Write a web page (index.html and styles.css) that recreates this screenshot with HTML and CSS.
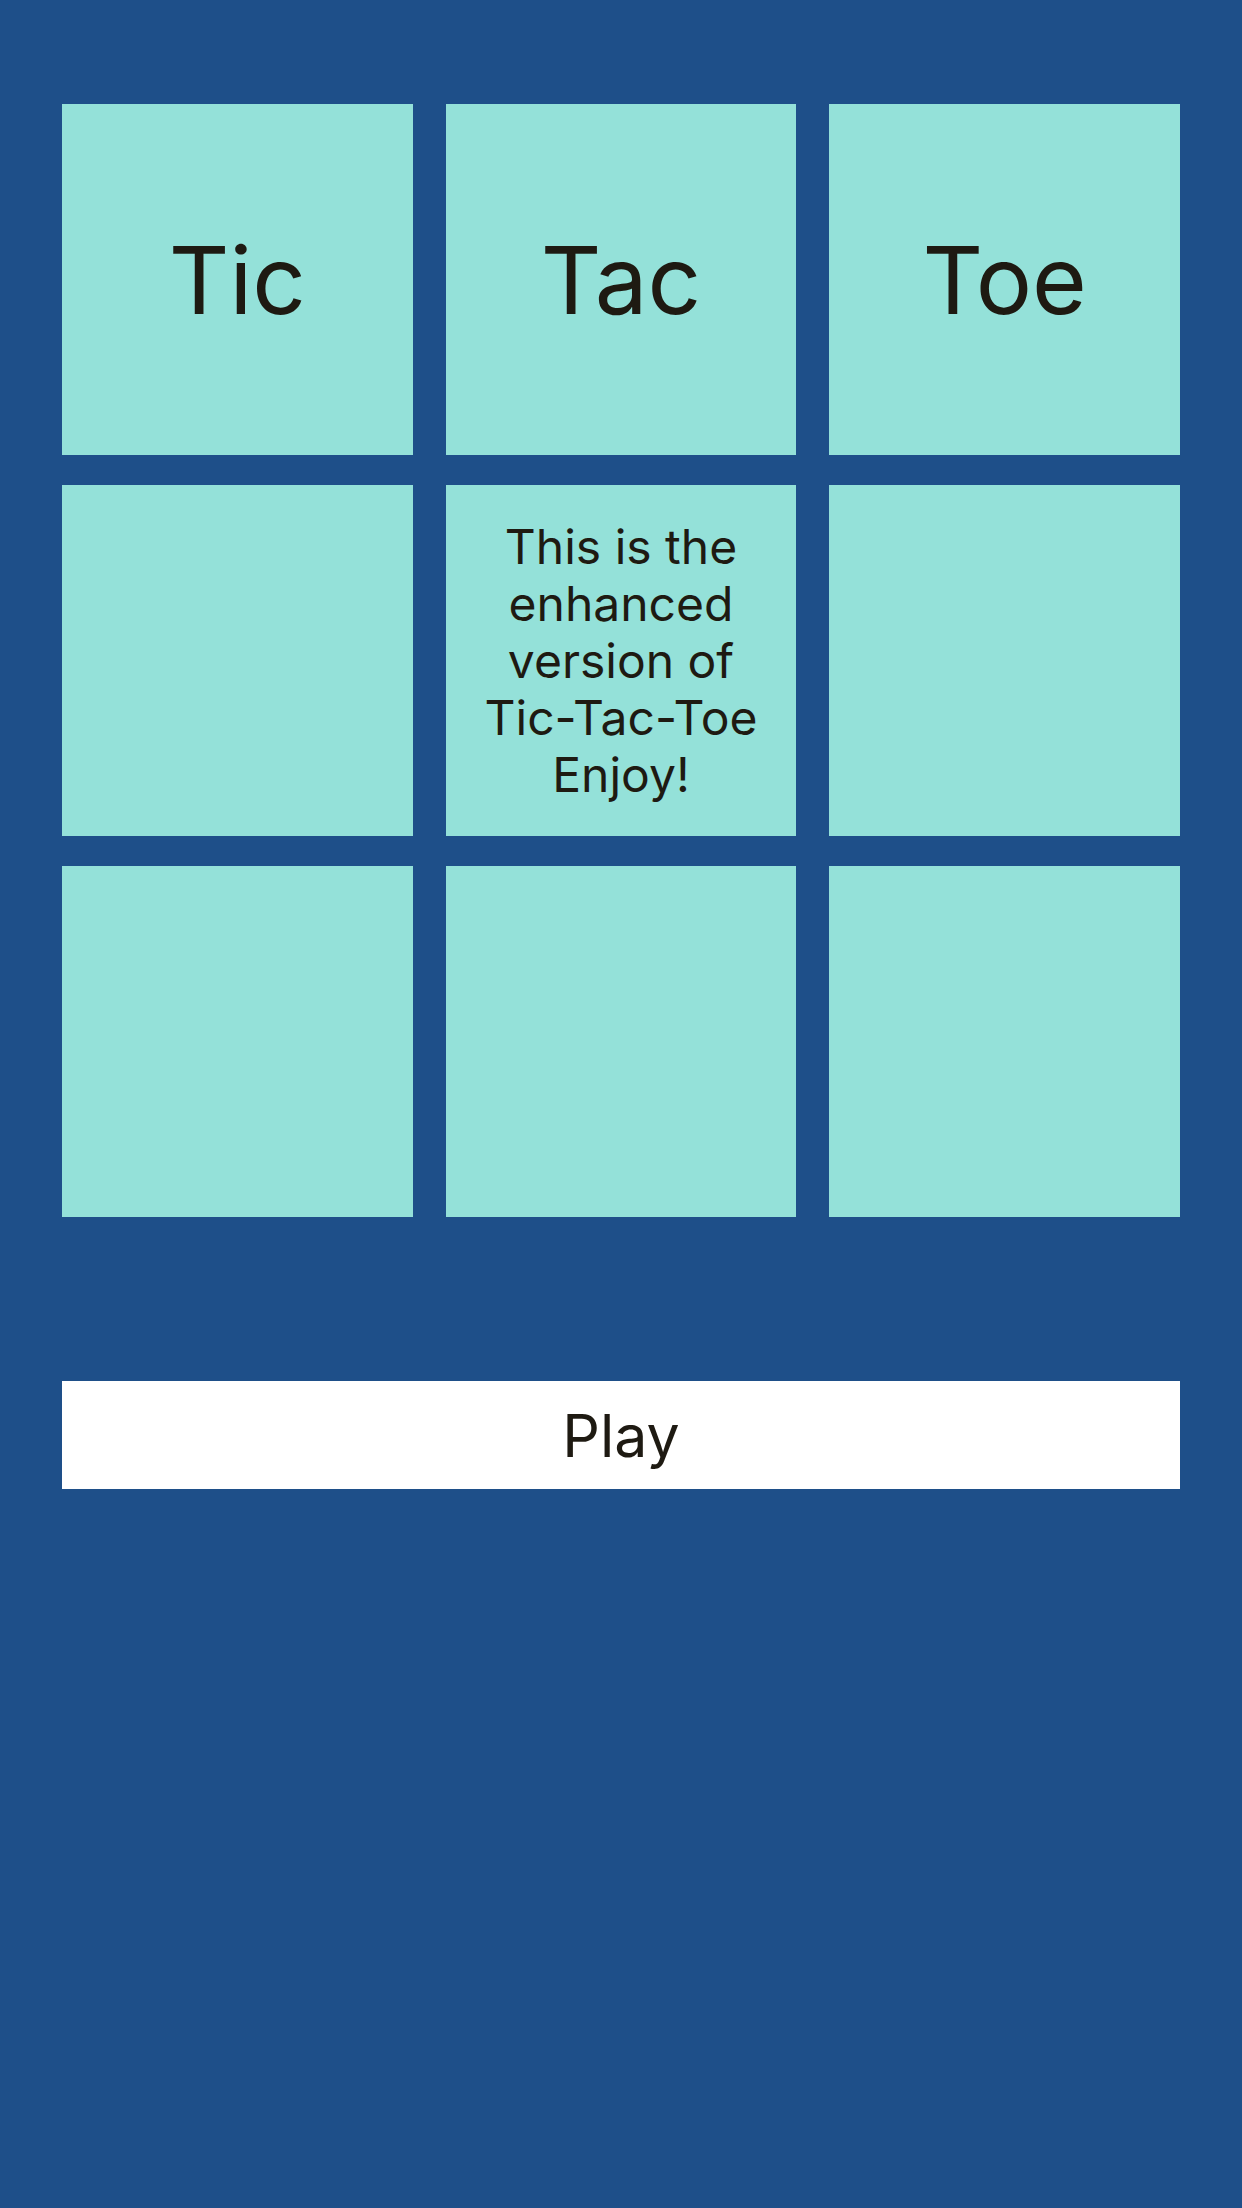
FILE: index.html
```html
<!DOCTYPE html>
<html lang="en">
<head>
    <meta charset="UTF-8">
    <meta name="viewport" content="width=device-width, initial-scale=1.0">
    <title>Tic Tac Toe</title>
    <link rel="stylesheet" href="styles.css">
</head>
<body>
  <div class="screen">
    <div class="board">
      <div class="cell big">Tic</div>
      <div class="cell big">Tac</div>
      <div class="cell big">Toe</div>
      <div class="cell"></div>
      <div class="cell intro">This is the enhanced version of Tic-Tac-Toe<br>Enjoy!</div>
      <div class="cell"></div>
      <div class="cell"></div>
      <div class="cell"></div>
      <div class="cell"></div>
    </div>
    <button type="button" class="play">Play</button>
  </div>
</body>
</html>
```

FILE: styles.css
```css
body {
  margin: 0;
  padding: 0;
  background-color: #1e4f89;
  font-family: Inter, "Noto Sans", sans-serif;
  color: #1e1a12;
  }
.screen {
  padding: 104px 62px 0 62px;
  }
.board {
  display: grid;
  grid-template-columns: repeat(3, 1fr);
  grid-auto-rows: 351px;
  column-gap: 33px;
  row-gap: 30px;
  }
.cell {
  background-color: #94e1d9;
  display: flex;
  align-items: center;
  justify-content: center;
  text-align: center;
  }
.big {
  font-size: 94px;
  }
.intro {
  font-size: 48px;
  line-height: 57px;
  padding: 0 38px;
  }
.play {
  display: block;
  width: 100%;
  height: 108px;
  margin-top: 164px;
  border: none;
  background-color: #fff;
  font-family: Inter, "Noto Sans", sans-serif;
  font-size: 59px;
  color: #1e1a12;
  padding: 0;
  }
```
